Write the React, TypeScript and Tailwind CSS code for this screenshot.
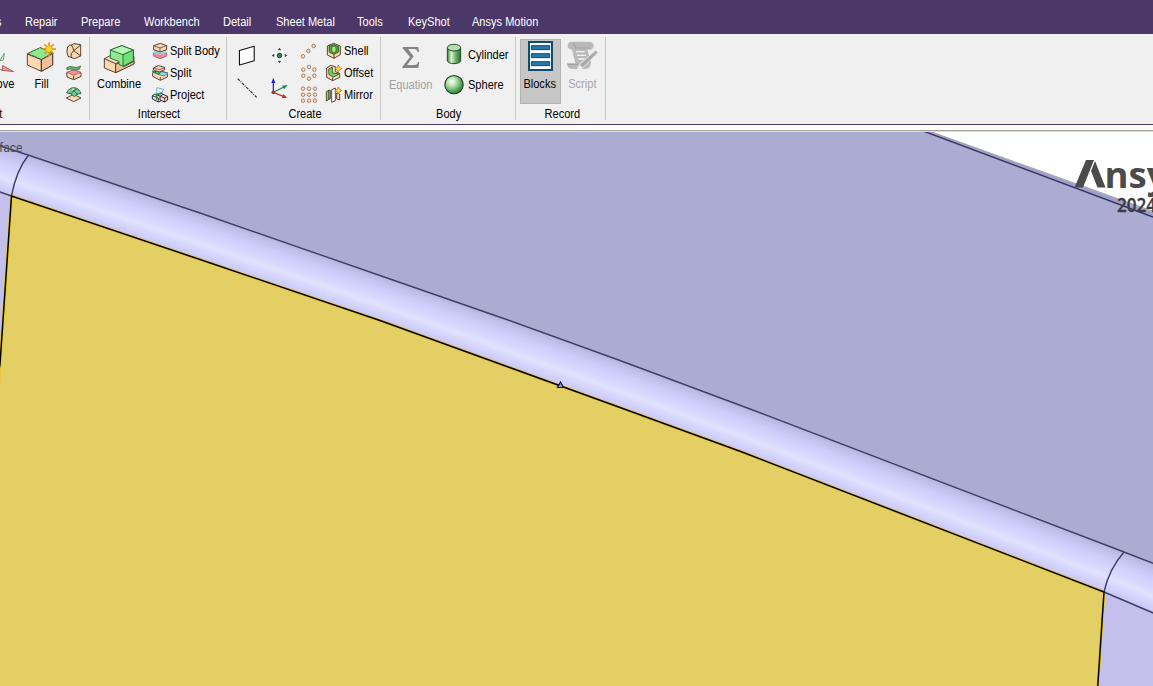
import React from "react";

type Kids = { children?: React.ReactNode };

function T({ children, className = "origin-left" }: Kids & { className?: string }) {
  return (
    <span className={"inline-block shrink-0 scale-x-[0.92] whitespace-nowrap text-[12px] leading-4 " + className}>
      {children}
    </span>
  );
}

function Icon({ box, w, h, children }: Kids & { box: string; w: number; h: number }) {
  return (
    <svg
      viewBox={box}
      width={w}
      height={h}
      className="block shrink-0 overflow-visible"
      fill="none"
      stroke="#4e3828"
      strokeWidth="2.8"
      strokeLinejoin="round"
    >
      {children}
    </svg>
  );
}

function Group({ label, width, labelClass = "justify-center pl-[3px]", children }: Kids & { label: string; width: string; labelClass?: string }) {
  return (
    <section className={"flex h-[90px] shrink-0 " + width}>
      <div className="flex min-w-0 flex-1 flex-col">
        <div className="flex h-[72px]">{children}</div>
        <div className={"flex h-4 items-center " + labelClass}>
          <T className="origin-center">{label}</T>
        </div>
      </div>
      <div className="mt-[3px] h-[83px] w-px shrink-0 bg-[#c8c8c8]" />
    </section>
  );
}

function Row({ icon, text }: { icon: React.ReactNode; text?: string }) {
  return (
    <div className="flex h-[22px] items-center gap-0.5">
      {icon}
      {text && <T>{text}</T>}
    </div>
  );
}

const TAN = "#fbd7b3";
const TAN2 = "#efc097";
const GREEN = "#8eea92";

const MoveIcon = () => (
  <Icon box="0 144 39 84" w={13} h={28}>
    <path d="M-4 182 L10 160 L7 180 Z" fill="#e3f3e5" stroke="#4c9a5d" strokeWidth="2.5" />
    <path d="M5 197 L38 215 L4 211 Z" fill="#ee9aa2" stroke="#a74850" strokeWidth="2.5" />
    <path d="M-2 208 L5 211" stroke="#7c4545" />
  </Icon>
);

const FillIcon = () => (
  <Icon box="78 126 96 96" w={32} h={32}>
    <path d="M82 161 L121 143 L158 160 L158 195 L124 214 L82 195Z" fill={TAN} />
    <path d="M84 161 L121 143 L156 160 L124 178Z" fill={GREEN} stroke="#237b36" strokeDasharray="7 3" />
    <path d="M124 179 L158 161 L158 195 L124 214Z" fill={TAN2} />
    <path d="M82 162 L124 179 V214" />
    <path d="M147 127 V168 M127 147 H168 M133 133 L161 161 M161 133 L133 161" stroke="#e98b18" strokeWidth="4.5" />
    <circle cx="147" cy="147" r="10" fill="#ffd51f" stroke="#ee9b18" strokeWidth="3" />
  </Icon>
);

const BlendIcon = () => (
  <Icon box="198 126 48 48" w={16} h={16}>
    <path d="M203 138 Q207 131 214 132 L222 128 L242 131 V165 L224 173 L204 166 Q198 152 203 138Z" fill={TAN} />
    <path d="M214 132 Q220 140 221 149 L242 132 M221 149 Q211 156 213 169 M221 149 L242 165" />
  </Icon>
);

const ReplaceIcon = () => (
  <Icon box="198 192 48 48" w={16} h={16}>
    <path d="M200 216 L220 209 L243 215 V226 L221 236 L201 228Z" fill={TAN} />
    <path d="M200 214 L222 206 L243 214 L221 223Z" fill="#f58e9a" stroke="#a54f59" strokeWidth="2.4" />
    <path d="M221 225 V236" />
    <path d="M199 201 Q209 193 219 198 Q230 202 242 195 L238 205 Q226 209 218 206 Q209 201 203 207Z" fill="#62b868" stroke="#2d7040" strokeWidth="2.4" />
  </Icon>
);

const PatchIcon = () => (
  <Icon box="198 258 48 48" w={16} h={16}>
    <path d="M199 291 L221 280 L243 291 L221 302Z" fill={TAN} />
    <path d="M200 276 Q206 260 222 260 Q237 261 243 278 Q233 276 223 287 Q214 275 200 276Z" fill="#6fd08c" stroke="#245b39" strokeWidth="2.6" />
    <path d="M212 264 Q223 270 234 282 M232 263 Q219 268 212 279" stroke="#2453a8" />
    <path d="M221 263 L215 268" stroke="#ffe24b" strokeWidth="4.5" />
  </Icon>
);

const CombineIcon = () => (
  <Icon box="309 129 96 90" w={32} h={30}>
    <path d="M313 173 L338 160 L402 166 V188 L347 215 L313 201Z" fill={TAN} />
    <path d="M313 173 L347 188 V215 M347 188 L360 181" />
    <path d="M373 196 L402 181 V189 L347 215 V190 L362 184Z" fill={TAN2} />
    <path d="M331 147 L365 134 L400 147 V180 L369 196 L357 190 L357 181 L331 172Z" fill={GREEN} stroke="#256b35" />
    <path d="M331 147 L365 134 L400 147 L369 161Z" fill="#b6f7b5" stroke="#256b35" />
    <path d="M369 161 L400 147 V180 L369 196Z" fill="#70df77" stroke="#256b35" />
  </Icon>
);

const SplitBodyIcon = () => (
  <Icon box="456 126 48 48" w={16} h={16}>
    <path d="M461 155 L480 162 L500 154 V165 L480 173 L461 165Z" fill="#f38b91" stroke="#a84953" strokeWidth="2.4" />
    <path d="M461 148 L480 155 L500 148 V154 L480 161 L461 155Z" fill="#6fc0ec" stroke="#d8efff" strokeWidth="2" />
    <path d="M461 134 L481 127 L500 134 V146 L480 153 L461 146Z" fill={TAN} />
    <path d="M461 134 L480 141 L500 134 M480 141 V153" strokeWidth="2.2" />
  </Icon>
);

const SplitIcon = () => (
  <Icon box="456 192 48 48" w={16} h={16}>
    <path d="M458 215 L475 208 L502 216 V228 L481 238 L458 226Z" fill={TAN} />
    <path d="M460 201 L475 194 L494 199 V206 L479 213 L460 207Z" fill={TAN} />
    <path d="M460 201 L479 206 L494 200 M481 228 V237" strokeWidth="2.2" />
    <path d="M474 220 L485 212 L503 216 L492 225Z" fill="#9ed6f5" stroke="#42728b" strokeWidth="2.5" />
    <path d="M457 210 L472 218 L481 214" stroke="#169348" strokeWidth="5" />
  </Icon>
);

const ProjectIcon = () => (
  <Icon box="456 258 48 48" w={16} h={16}>
    <path d="M457 284 L465 279 L484 287 V299 L475 303 L457 294Z" fill={TAN} stroke="#1d1a48" />
    <path d="M480 286 L489 280 L503 286 V297 L494 303 L480 297Z" fill={TAN} stroke="#1d1a48" />
    <path d="M475 291 V303 M457 284 L475 291 M494 291 V303 M480 286 L494 291 L503 286" stroke="#1d1a48" strokeWidth="2.4" />
    <path d="M470 260 L491 265 L486 274 L470 279Z" stroke="#5a9ccc" strokeWidth="2.5" fill="#f4faff" />
    <path d="M470 296 V281 L488 276" stroke="#159144" strokeWidth="4.5" />
  </Icon>
);

const PlaneIcon = () => (
  <Icon box="36 33 60 64" w={20} h={21}>
    <path d="M43 50 L88 37 V81 L43 94Z" fill="#fff" stroke="#111" strokeWidth="3.4" />
  </Icon>
);

const LineIcon = () => (
  <Icon box="36 132 60 60" w={20} h={20}>
    <path d="M38 134 L95 190" stroke="#333" strokeWidth="3.5" strokeDasharray="9 3 3 3" />
  </Icon>
);

const PointIcon = () => (
  <Icon box="141 42 45 45" w={15} h={15}>
    <path d="M163 42 L186 64 L163 87 L141 64Z" fill="#fff" stroke="none" />
    <circle cx="163.5" cy="64.5" r="7" fill="#397c4b" stroke="#1c5130" />
    <path d="M163.500 41 L169 49 H158Z M163.500 88 L158 80 H169Z M140 64.500 L148 59 V70Z M187 64.500 L179 59 V70Z" fill="#1e5132" stroke="none" />
  </Icon>
);

const AxesIcon = () => (
  <Icon box="135 132 57 63" w={19} h={21}>
    <path d="M145 175 V142" stroke="#1818f0" strokeWidth="3.6" />
    <path d="M145 131 L151 147 H139Z" fill="#1818f0" stroke="none" />
    <path d="M145 175 L177 159" stroke="#168b55" strokeWidth="3.6" />
    <path d="M188 153 L171 155 L177 166Z" fill="#0d9150" stroke="none" />
    <path d="M145 175 L175 187" stroke="#d72935" strokeWidth="3.6" />
    <path d="M187 192 L170 192 L175 180Z" fill="#d72935" stroke="none" />
    <circle cx="145" cy="175" r="5.5" fill="#9a3724" stroke="none" />
  </Icon>
);

function Dots({ points, box }: { points: number[][]; box: string }) {
  return (
    <Icon box={box} w={18} h={18}>
      {points.map(([x, y]) => (
        <circle key={x + "-" + y} cx={x} cy={y} r="5.3" fill="#ffdfc0" stroke="#a07a5d" strokeWidth="2.8" />
      ))}
    </Icon>
  );
}

const Spark = ({ x, y }: { x: number; y: number }) => (
  <g transform={`translate(${x} ${y})`}>
    <path d="M0 -11 L3 -4 L10 0 L4 3 L0 10 L-4 3 L-10 0 L-3 -4Z" fill="#ffe23a" stroke="#f4701e" strokeWidth="3" />
  </g>
);

const ShellIcon = () => (
  <Icon box="303 24 48 48" w={16} h={16}>
    <path d="M307 33 L326 25 L346 33 V59 L327 70 L307 60Z" fill={TAN} />
    <path d="M312 34 L326 29 L341 35 V51 L327 58 L313 52Z" fill="#54a83f" stroke="#285720" />
    <path d="M320 36 L327 33 L333 37 V49 L327 53 L320 49Z" fill="#a8e87e" stroke="#285720" strokeWidth="2" />
    <path d="M327 58 V70" />
  </Icon>
);

const OffsetIcon = () => (
  <Icon box="303 90 48 48" w={16} h={16}>
    <path d="M305 99 L317 91 L331 95 V110 L344 115 V127 L323 137 L305 127Z" fill={TAN} />
    <path d="M311 102 L322 97 V114 L342 117 L326 126 L312 119Z" fill="#86cc68" stroke="#2f6127" />
    <path d="M323 127 V137" />
    <Spark x={340} y={101} />
  </Icon>
);

const MirrorIcon = () => (
  <Icon box="303 156 48 48" w={16} h={16}>
    <path d="M304 170 L312 165 V193 L304 198Z" fill="#88ce68" stroke="#33542b" />
    <path d="M312 165 L317 167 V190 L312 193Z" fill={TAN} />
    <path d="M320 164 L331 159 V197 L320 202Z" fill="#fff" stroke="#444" />
    <path d="M335 174 L344 177 V195 L335 192Z" fill={TAN} />
    <Spark x={340} y={167} />
  </Icon>
);

const CylinderIcon = () => (
  <Icon box="195 30 54 66" w={18} h={22}>
    <defs>
      <linearGradient id="cyl">
        <stop offset="0" stopColor="#3b8739" />
        <stop offset=".3" stopColor="#d9f4d1" />
        <stop offset=".65" stopColor="#67ae5d" />
        <stop offset="1" stopColor="#256d2b" />
      </linearGradient>
    </defs>
    <path d="M202 41 V80 C204 92 240 92 242 80 V41" fill="url(#cyl)" stroke="#1c4322" />
    <ellipse cx="222" cy="41" rx="20" ry="10" fill="#b6dfae" stroke="#1c4322" />
  </Icon>
);

const SphereIcon = () => (
  <Icon box="192 122 60 60" w={20} h={20}>
    <defs>
      <radialGradient id="sph" cx=".38" cy=".34" r=".68">
        <stop offset="0" stopColor="#fff" />
        <stop offset=".35" stopColor="#b8e3b2" />
        <stop offset=".75" stopColor="#5ba75a" />
        <stop offset="1" stopColor="#2f7b35" />
      </radialGradient>
    </defs>
    <circle cx="222" cy="151" r="27.500" fill="url(#sph)" stroke="#1b3b20" strokeWidth="3.2" />
  </Icon>
);

const SigmaIcon = () => (
  <Icon box="66 36 54 66" w={18} h={22}>
    <path d="M68 39 H115 L117 54 H113 Q111 45 102 45 H84 L101 67 L81 93 H104 Q112 93 114 84 H118 L115 102 H67 V98 L90 69 L68 43Z" fill="#858585" stroke="none" />
  </Icon>
);

const BlocksIcon = () => (
  <Icon box="441 21 75 90" w={25} h={30}>
    <path d="M441 21 H516 V111 H441Z" fill="#104b72" stroke="none" />
    <path d="M447 27 H510 V105 H447Z" fill="#fff" stroke="none" />
    <path d="M451 35 H506 V47 H451Z M451 59 H506 V71 H451Z M451 83 H506 V95 H451Z" fill="#2777a8" stroke="#104b72" strokeWidth="3" />
  </Icon>
);

const ScriptIcon = () => (
  <Icon box="558 18 96 96" w={32} h={32}>
    <path d="M574 23 H629 Q641 25 641 38 Q640 46 629 47 H622 L633 82 Q634 104 617 105 H574 Q560 102 561 88 H586 L576 47 Q562 46 563 34 Q565 24 574 23Z" fill="#bababa" stroke="none" />
    <path d="M577 29 Q587 29 586 41 M586 42 H630 M563 91 H594" stroke="#a2a2a2" strokeWidth="3.5" />
    <path d="M588 53 H614 M591 64 H618 M595 75 H614" stroke="#f2f2f2" strokeWidth="4" />
    <path d="M646 49 L655 55 L609 101 L591 109 L598 92Z" fill="#aaaaaa" stroke="#eee" strokeWidth="3" />
    <path d="M600 94 L607 100 L592 107Z" fill="#fff" stroke="none" />
  </Icon>
);

const menu: [string, string][] = [
  ["s", "w-[2px] justify-end"],
  ["Repair", "w-[33px]"],
  ["Prepare", "w-[40px]"],
  ["Workbench", "w-[56px]"],
  ["Detail", "w-[30px]"],
  ["Sheet Metal", "w-[58px]"],
  ["Tools", "w-[28px]"],
  ["KeyShot", "w-[41px]"],
  ["Ansys Motion", "w-[68px]"],
];

const topEdge = [[-10, 143], [0, 146], [28, 155], [200, 213], [390, 279], [508, 320], [620, 360.5], [750, 409], [1124, 552], [1165, 568]];
const bottomEdge = [[-10, 189], [0, 192], [11, 196], [200, 259.5], [380, 320.5], [500, 364], [620, 407.5], [742, 452], [1104, 592], [1165, 618]];

const shades: [number, number[]][] = [
  [0, [182, 182, 222]],
  [0.12, [193, 193, 236]],
  [0.28, [206, 206, 251]],
  [0.48, [214, 214, 255]],
  [0.65, [225, 225, 255]],
  [0.82, [212, 212, 254]],
  [1, [198, 198, 243]],
];

function shadeAt(t: number) {
  for (let i = 1; i < shades.length; i++) {
    const [a, ca] = shades[i - 1];
    const [b, cb] = shades[i];
    if (t <= b) {
      const k = (t - a) / (b - a);
      return `rgb(${ca.map((c, j) => Math.round(c + (cb[j] - c) * k)).join(",")})`;
    }
  }
  return "rgb(198,198,243)";
}

const STEPS = 48;

function Viewport() {
  const edge = (pts: number[][]) => pts.map((p) => p.join(",")).join(" ");
  const at = (pts: number[][], x: number) => {
    const i = Math.max(1, pts.findIndex((p) => p[0] >= x));
    const [x0, y0] = pts[i - 1];
    const [x1, y1] = pts[i];
    return y0 + ((y1 - y0) * (x - x0)) / (x1 - x0);
  };
  const xs = [-10, 0, 28, 200, 390, 508, 620, 750, 930, 1104, 1124, 1165];
  const bands = Array.from({ length: STEPS }, (_, i) => {
    const a = i / STEPS;
    const line = xs.map((x) => `${x},${at(topEdge, x) * (1 - a) + at(bottomEdge, x) * a}`);
    return <polygon key={i} points={line.join(" ") + " 1165,700 -10,700"} fill={shadeAt(a)} />;
  });
  return (
    <svg viewBox="0 132 1153 554" width={1153} height={554} className="block" fill="none">
      <path d="M0 132H1153V686H0Z" fill="#fff" />
      <path d="M0 132H927L1153 214V686H0Z" fill="#acacd2" />
      <path d="M923 131L1153 217V212L929 131Z" fill="#9f9fca" />
      <path d="M930 131.500L1153 211.500" stroke="#a4a4ae" strokeWidth="1.2" />
      <path d="M923 131L1153 217" stroke="#343464" strokeWidth="1.4" />
      {bands}
      <polygon points={edge(bottomEdge) + " 1165,700 -10,700"} fill="#c3c1eb" />
      <path d="M11.500 196L200 259.500L380 320.500L500 364L620 407.500L742 452L1104 592L1097.500 690H-22L0 364Z" fill="#e4cf64" stroke="#e6c63a" strokeWidth="3" />
      <polyline points={edge(topEdge)} stroke="#3f3f68" strokeWidth="1.4" />
      <path d="M-10 189L0 192L11.500 196M1104 592L1165 618M28.500 155Q16 171 11.500 196M1124 552Q1109 569 1104 592" stroke="#3c3c66" strokeWidth="1.4" />
      <path d="M-1 370L0 364L11.500 196L200 259.500L380 320.500L500 364L620 407.500L742 452L1104 592L1097.500 690" stroke="#000" strokeWidth="1.5" />
      <path d="M560.500 382L563.500 387.500H557.500Z" fill="#9098c9" stroke="#101044" strokeWidth="1.2" />
      <text x="-1" y="152" fontSize="12.500" textLength="23.500" lengthAdjust="spacingAndGlyphs" fill="#4b4b55" fontFamily="Roboto, sans-serif">face</text>
      <path d="M1086 160H1094L1083 187.500H1074.500ZM1095 161L1105.500 187.500H1097.500L1091 171Z" fill="#4b4b4b" />
      <g fill="#4b4b4b" fontFamily="'Open Sans', sans-serif">
        <text x="1104.500" y="187.500" fontSize="36" fontWeight="700" textLength="63" lengthAdjust="spacingAndGlyphs">nsy</text>
        <text x="1117" y="211.500" fontSize="19" fontWeight="600" stroke="#3b3b40" strokeWidth=".3" textLength="39" lengthAdjust="spacingAndGlyphs" fill="#3b3b40">2024</text>
      </g>
    </svg>
  );
}

export default function App() {
  return (
    <div className="flex h-[686px] w-[1153px] flex-col overflow-hidden bg-white font-['Liberation_Sans',Arial,sans-serif] text-black">
      <nav className="flex h-[34px] shrink-0 items-center gap-[23px] bg-[#4b3868] pt-[10px] text-white">
        {menu.map(([name, cls]) => (
          <div key={name} className={"flex shrink-0 " + cls}>
            <T>{name}</T>
          </div>
        ))}
      </nav>

      <div className="flex h-[90px] shrink-0 bg-[#f0f0f0]">
        <Group label="t" width="w-[90px]" labelClass="justify-start -ml-px">
          <div className="flex w-[14px] flex-col items-end pt-[14px]">
            <MoveIcon />
            <T className="origin-right">ove</T>
          </div>
          <div className="ml-[13px] flex w-[30px] flex-col items-center gap-0.5 pt-2">
            <FillIcon />
            <T className="origin-center">Fill</T>
          </div>
          <div className="ml-[9px] pt-[6px]">
            <Row icon={<BlendIcon />} />
            <Row icon={<ReplaceIcon />} />
            <Row icon={<PatchIcon />} />
          </div>
        </Group>

        <Group label="Intersect" width="w-[137px]">
          <div className="ml-[6px] flex w-[46px] flex-col items-center gap-0.5 pt-[10px]">
            <CombineIcon />
            <T className="origin-center">Combine</T>
          </div>
          <div className="ml-[10px] pt-[6px]">
            <Row icon={<SplitBodyIcon />} text="Split Body" />
            <Row icon={<SplitIcon />} text="Split" />
            <Row icon={<ProjectIcon />} text="Project" />
          </div>
        </Group>

        <Group label="Create" width="w-[154px]">
          <div className="ml-[10px] flex w-5 flex-col gap-3 pt-[11px]">
            <PlaneIcon />
            <LineIcon />
          </div>
          <div className="ml-[13px] flex w-[19px] flex-col items-center gap-[15px] pt-[14px]">
            <PointIcon />
            <AxesIcon />
          </div>
          <div className="ml-[11px] pt-[6px]">
            <Row icon={<Dots box="225 22 54 54" points={[[234, 65], [250, 49], [266, 34]]} />} />
            <Row icon={<Dots box="225 88 54 54" points={[[252, 97], [268, 105], [268, 123], [252, 132], [235, 123], [235, 105]]} />} />
            <Row
              icon={
                <Dots
                  box="225 154 54 54"
                  points={[[234, 162], [252, 162], [270, 162], [234, 180], [252, 180], [270, 180], [234, 198], [252, 198], [270, 198]]}
                />
              }
            />
          </div>
          <div className="ml-2 pt-[6px]">
            <Row icon={<ShellIcon />} text="Shell" />
            <Row icon={<OffsetIcon />} text="Offset" />
            <Row icon={<MirrorIcon />} text="Mirror" />
          </div>
        </Group>

        <Group label="Body" width="w-[135px]" labelClass="justify-center pl-px">
          <div className="ml-2 flex w-[44px] flex-col items-center gap-[9px] pt-3 text-[#a0a0a0]">
            <SigmaIcon />
            <T className="origin-center">Equation</T>
          </div>
          <div className="ml-[11px] pt-[6px]">
            <div className="flex h-[30px] items-center gap-1">
              <div className="flex w-5 justify-center"><CylinderIcon /></div>
              <T>Cylinder</T>
            </div>
            <div className="flex h-[30px] items-center gap-1">
              <SphereIcon />
              <T>Sphere</T>
            </div>
          </div>
        </Group>

        <Group label="Record" width="w-[90px]">
          <div className="ml-1 mt-[5px] flex h-[65px] w-[41px] shrink-0 flex-col items-center gap-[5px] border border-[#b2b2b2] bg-[#c6c6c6] pr-px pt-px">
            <BlocksIcon />
            <T className="origin-center">Blocks</T>
          </div>
          <div className="ml-[5px] flex w-[32px] flex-col items-center gap-1 pt-[6px] text-[#a6a6a6]">
            <ScriptIcon />
            <T className="origin-center">Script</T>
          </div>
        </Group>
      </div>

      <div className="h-px shrink-0 bg-[#4b3868]" />
      <div className="h-[5px] shrink-0 bg-white" />
      <div className="h-px shrink-0 bg-[#aaa596]" />
      <div className="h-px shrink-0 bg-[#e3dcc8]" />
      <main className="h-[554px] shrink-0">
        <Viewport />
      </main>
    </div>
  );
}
